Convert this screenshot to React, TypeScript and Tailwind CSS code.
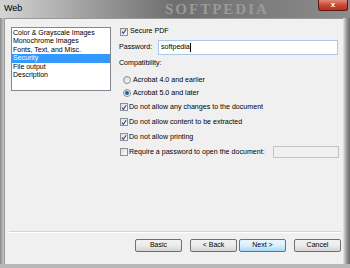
import React from "react";

const font = { fontFamily: '"Liberation Sans", Arial, sans-serif' };

function Check({ checked }: { checked?: boolean }) {
  return (
    <div className="w-[8px] h-[8px] border border-[#8e8f8f] bg-gradient-to-br from-[#dcdcdc] to-[#fdfdfd] flex items-center justify-center shrink-0">
      {checked && (
        <svg width="7" height="7" viewBox="0 0 7 7">
          <path d="M1 3.6 L2.8 5.6 L6 0.8" stroke="#2a4a9a" strokeWidth="1.3" fill="none" />
        </svg>
      )}
    </div>
  );
}

function Radio({ checked }: { checked?: boolean }) {
  return (
    <div className="w-[8px] h-[8px] rounded-full border border-[#8e8f8f] bg-gradient-to-br from-[#d6d6d6] to-[#fafafa] flex items-center justify-center shrink-0">
      {checked && <div className="w-[4px] h-[4px] rounded-full bg-[#1f5da8]" />}
    </div>
  );
}

function Btn({ label, focus }: { label: string; focus?: boolean }) {
  return (
    <div
      className={
        "w-[47px] h-[13px] rounded-[2px] border flex items-center justify-center text-[7px] text-black " +
        (focus
          ? "border-[#3c7fb1] bg-gradient-to-b from-[#eaf6fd] via-[#d9f0fc] to-[#a7d9f5]"
          : "border-[#707070] bg-gradient-to-b from-[#f2f2f2] via-[#ebebeb] to-[#d4d4d4]")
      }
    >
      {label}
    </div>
  );
}

export default function App() {
  const items = [
    "Color & Grayscale Images",
    "Monochrome Images",
    "Fonts, Text, and Misc.",
    "Security",
    "File output",
    "Description",
  ];
  return (
    <div className="w-[350px] h-[268px] overflow-hidden flex flex-col bg-[#a8a8a8]" style={font}>
      {/* title bar */}
      <div className="h-[18px] relative flex items-start bg-gradient-to-r from-[#d4d4d4] via-[#6e6e6e] to-[#8c8c8c] shrink-0">
        <span className="pl-[4px] pt-[3px] text-[9px] leading-[10px] text-black">Web</span>
        <span
          className="absolute left-[165px] top-[1px] text-[15px] leading-[16px] text-[#9a9a9a] tracking-[2px] font-bold"
          style={{ fontFamily: '"Liberation Serif", serif' }}
        >
          SOFTPEDIA
        </span>
        <div className="absolute right-[2px] top-0 w-[30px] h-[11px] rounded-b-[3px] border border-t-0 border-[#5a1a12] bg-gradient-to-b from-[#e08a7a] via-[#c74a35] to-[#b8301c] flex items-center justify-center">
          <span className="text-white text-[8px] font-bold leading-[8px]">x</span>
        </div>
      </div>
      <div className="flex flex-1">
        <div className="w-[4px] bg-gradient-to-r from-[#8a8a8a] to-[#c8c8c8]" />
        <div className="w-[339px] bg-[#f0f0f0] flex flex-col border-l border-t border-[#9a9a9a]">
          <div className="flex flex-1 pt-[8px] pl-[6px]">
            {/* list */}
            <div className="w-[100px] h-[64px] bg-white border border-[#828790] pt-[1px] shrink-0">
              {items.map((t) => (
                <div
                  key={t}
                  className={
                    "h-[8.4px] pl-[1px] text-[7px] leading-[8.4px] whitespace-nowrap " +
                    (t === "Security" ? "bg-[#3399ff] text-white" : "text-black")
                  }
                >
                  {t}
                </div>
              ))}
            </div>
            {/* right panel */}
            <div className="flex flex-col ml-[8px] text-[7.1px] text-black w-[220px]">
              <div className="h-[9px] flex items-center gap-[2px] pl-[1px]">
                <Check checked />
                <span>Secure PDF</span>
              </div>
              <div className="h-[15px] mt-[4px] flex items-center">
                <span className="w-[39px]">Password:</span>
                <div className="w-[180px] h-[15px] border border-[#a9c8ea] bg-white flex items-center pl-[2px]">
                  <span>softpedia</span>
                  <span className="w-[1px] h-[9px] bg-black ml-[0.5px]" />
                </div>
              </div>
              <div className="h-[9px] mt-[4px] flex items-center">Compatibility:</div>
              <div className="h-[10px] mt-[7px] flex items-center gap-[2px] pl-[4px]">
                <Radio />
                <span>Acrobat 4.0 and earlier</span>
              </div>
              <div className="h-[10px] mt-[3px] flex items-center gap-[2px] pl-[4px]">
                <Radio checked />
                <span>Acrobat 5.0 and later</span>
              </div>
              <div className="h-[10px] mt-[4px] flex items-center gap-[1px] pl-[1px]">
                <Check checked />
                <span>Do not allow any changes to the document</span>
              </div>
              <div className="h-[10px] mt-[5px] flex items-center gap-[1px] pl-[1px]">
                <Check checked />
                <span>Do not allow content to be extracted</span>
              </div>
              <div className="h-[10px] mt-[5px] flex items-center gap-[1px] pl-[1px]">
                <Check checked />
                <span>Do not allow printing</span>
              </div>
              <div className="h-[12px] mt-[4px] flex items-center gap-[1px] pl-[1px]">
                <Check />
                <span>Require a password to open the document:</span>
                <div className="ml-auto w-[66px] h-[12px] border border-[#c4c4c4] bg-[#f0f0f0]" />
              </div>
            </div>
          </div>
          <div className="ml-[4px] mr-[2px] h-[2px] border-t border-[#d5d5d5] border-b-white border-b" />
          <div className="flex items-center h-[31px] pb-[6px] pr-[2px] justify-end">
            <Btn label="Basic" />
            <div className="w-[8px]" />
            <Btn label="< Back" />
            <div className="w-[2px]" />
            <Btn label="Next >" focus />
            <div className="w-[8px]" />
            <Btn label="Cancel" />
          </div>
        </div>
        <div className="flex-1 bg-gradient-to-r from-[#e8e8e8] via-[#9a9a9a] to-[#6a6a6a]" />
      </div>
      <div className="h-[4px] bg-[#b8b8b8] shrink-0" />
    </div>
  );
}
